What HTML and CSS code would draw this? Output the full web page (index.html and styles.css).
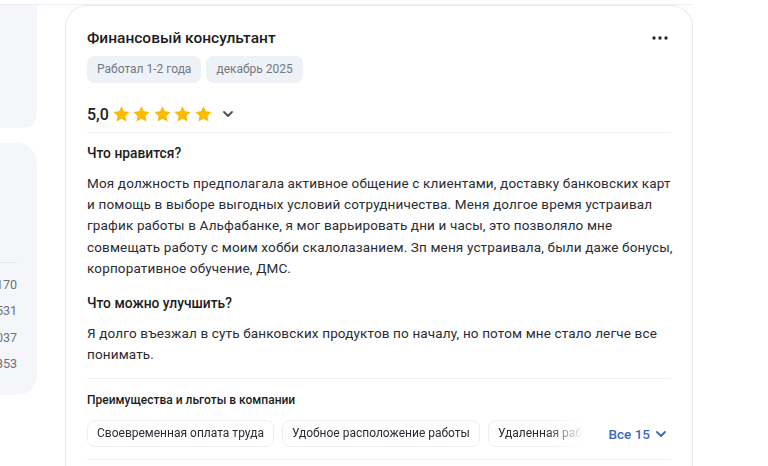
FILE: index.html
```html
<!DOCTYPE html>
<html lang="ru">
<head>
<meta charset="utf-8">
<link rel="stylesheet" href="styles.css">
</head>
<body>
<div class="topline"></div>
<div class="page">
  <aside class="side">
    <div class="panel panel-top"></div>
    <div class="panel panel-stats">
      <div class="stats-line"></div>
      <ul class="stats">
        <li>2 170</li>
        <li>1 531</li>
        <li>1 037</li>
        <li>1 353</li>
      </ul>
    </div>
  </aside>
  <article class="card">
    <header class="card-head">
      <h2 class="title">Финансовый консультант</h2>
      <button class="more" aria-label="Ещё">
        <svg width="16" height="4" viewBox="0 0 16 4"><circle cx="2" cy="2" r="1.7"/><circle cx="8" cy="2" r="1.7"/><circle cx="14" cy="2" r="1.7"/></svg>
      </button>
    </header>
    <div class="tags">
      <span class="tag">Работал 1-2 года</span>
      <span class="tag">декабрь 2025</span>
    </div>
    <div class="rating">
      <span class="score">5,0</span>
      <span class="stars">
        <svg viewBox="2 2.5 20 18.5"><path d="M12 2.5l2.9 6.1 6.6.8-4.9 4.6 1.3 6.6L12 17.3l-5.9 3.3 1.3-6.6-4.9-4.6 6.6-.8z"/></svg>
        <svg viewBox="2 2.5 20 18.5"><path d="M12 2.5l2.9 6.1 6.6.8-4.9 4.6 1.3 6.6L12 17.3l-5.9 3.3 1.3-6.6-4.9-4.6 6.6-.8z"/></svg>
        <svg viewBox="2 2.5 20 18.5"><path d="M12 2.5l2.9 6.1 6.6.8-4.9 4.6 1.3 6.6L12 17.3l-5.9 3.3 1.3-6.6-4.9-4.6 6.6-.8z"/></svg>
        <svg viewBox="2 2.5 20 18.5"><path d="M12 2.5l2.9 6.1 6.6.8-4.9 4.6 1.3 6.6L12 17.3l-5.9 3.3 1.3-6.6-4.9-4.6 6.6-.8z"/></svg>
        <svg viewBox="2 2.5 20 18.5"><path d="M12 2.5l2.9 6.1 6.6.8-4.9 4.6 1.3 6.6L12 17.3l-5.9 3.3 1.3-6.6-4.9-4.6 6.6-.8z"/></svg>
      </span>
      <svg class="chev" width="12" height="8" viewBox="0 0 12 8"><path d="M2 2l4 4 4-4" fill="none" stroke="#4a4f5a" stroke-width="1.8" stroke-linecap="round" stroke-linejoin="round"/></svg>
    </div>
    <div class="divider"></div>
    <section class="block">
      <h3 class="block-title">Что нравится?</h3>
      <p class="text">Моя должность предполагала активное общение с клиентами, доставку банковских карт и помощь в выборе выгодных условий сотрудничества. Меня долгое время устраивал график работы в Альфабанке, я мог варьировать дни и часы, это позволяло мне совмещать работу с моим хобби скалолазанием. Зп меня устраивала, были даже бонусы, корпоративное обучение, ДМС.</p>
    </section>
    <section class="block">
      <h3 class="block-title">Что можно улучшить?</h3>
      <p class="text">Я долго въезжал в суть банковских продуктов по началу, но потом мне стало легче все понимать.</p>
    </section>
    <div class="divider div2"></div>
    <section class="benefits">
      <h4 class="ben-title">Преимущества и льготы в компании</h4>
      <div class="ben-row">
        <div class="chips">
          <span class="chip">Своевременная оплата труда</span>
          <span class="chip">Удобное расположение работы</span>
          <span class="chip">Удаленная работа</span>
        </div>
        <button class="all">Все 15
          <svg width="12" height="8" viewBox="0 0 12 8"><path d="M2 2l4 4 4-4" fill="none" stroke="#3a68c0" stroke-width="1.8" stroke-linecap="round" stroke-linejoin="round"/></svg>
        </button>
      </div>
    </section>
    <div class="divider div3"></div>
  </article>
</div>
</body>
</html>
```
FILE: styles.css
```css
* { box-sizing: border-box; }
html, body { margin: 0; padding: 0; background: #fff; }
body {
  font-family: Roboto, "Noto Sans", Arial, sans-serif;
  color: #1f2126;
  width: 768px;
  height: 466px;
  overflow: hidden;
}
.topline {
  width: 693px;
  height: 5px;
  border-bottom: 1px solid #eceef3;
}
.page {
  display: flex;
  align-items: flex-start;
  gap: 28px;
}
.side {
  width: 200px;
  margin-left: -163px;
  display: flex;
  flex-direction: column;
  gap: 15px;
  flex: none;
}
.panel { background: #f4f6f9; }
.panel-top {
  height: 123px;
  border-radius: 0 0 14px 14px;
}
.panel-stats {
  height: 252px;
  border-radius: 20px;
  padding-top: 119px;
  padding-right: 20px;
}
.stats-line {
  height: 1px;
  background: #e6e8ed;
}
.stats {
  list-style: none;
  margin: 0;
  padding: 14px 0 0;
  text-align: right;
  font-size: 12.5px;
  color: #6d7280;
}
.stats li { height: 26.3px; line-height: 16px; }
.card {
  width: 628px;
  flex: none;
  height: 470px;
  border: 1px solid #e7e9ef;
  border-bottom: none;
  border-radius: 22px 22px 0 0;
  padding: 22px 20px 0 21px;
}
.card-head {
  display: flex;
  justify-content: space-between;
  align-items: center;
}
.title {
  margin: 0;
  font-size: 15.5px;
  font-weight: 500;
  line-height: 20px;
  color: #1b1d22;
}
.more {
  border: none;
  background: none;
  padding: 0;
  margin-right: 4px;
  display: flex;
}
.more svg { fill: #24262c; }
.tags {
  display: flex;
  gap: 5px;
  margin-top: 8px;
}
.tag {
  background: #eef1f6;
  color: #737985;
  font-size: 12px;
  line-height: 27px;
  height: 27px;
  padding: 0 10px;
  border-radius: 8px;
}
.rating {
  display: flex;
  align-items: center;
  margin-top: 19px;
  height: 24px;
}
.score {
  font-size: 16px;
  font-weight: 500;
  color: #1b1d22;
}
.stars {
  display: flex;
  gap: 3.5px;
  margin-left: 4px;
}
.stars svg { width: 17px; height: 16px; fill: #fcba03; }
.chev { margin-left: 10px; }
.divider {
  height: 1px;
  background: #eef0f4;
  margin-top: 6px;
  width: 584px;
}
.block { margin-top: 11px; }
.block + .block { margin-top: 15px; }
.block-title {
  margin: 0;
  font-size: 13.8px;
  font-weight: 500;
  line-height: 18px;
  color: #1b1d22;
}
.text {
  margin: 11px 0 0;
  font-size: 13.5px;
  letter-spacing: 0.15px;
  line-height: 21.2px;
  color: #2a2c32;
  width: 590px;
}
.div2 { margin-top: 13px; }
.benefits { margin-top: 13px; }
.ben-title {
  margin: 0;
  font-size: 12px;
  font-weight: 500;
  line-height: 16px;
  color: #1b1d22;
}
.ben-row {
  display: flex;
  align-items: center;
  margin-top: 12px;
  width: 584px;
}
.chips {
  display: flex;
  gap: 8px;
  width: 496px;
  overflow: hidden;
  -webkit-mask-image: linear-gradient(to right, #000 460px, transparent 496px);
  mask-image: linear-gradient(to right, #000 460px, transparent 496px);
}
.chip {
  flex: none;
  border: 1px solid #eceef3;
  border-radius: 8px;
  height: 27px;
  line-height: 25px;
  padding: 0 9px;
  font-size: 12px;
  color: #2a2c32;
}
.all {
  margin-left: auto;
  margin-right: 4px;
  border: none;
  background: none;
  padding: 0;
  font-family: inherit;
  font-size: 13.5px;
  font-weight: 500;
  color: #3a68c0;
  display: flex;
  align-items: center;
  gap: 5px;
}
.div3 { margin-top: 12px; }
```
